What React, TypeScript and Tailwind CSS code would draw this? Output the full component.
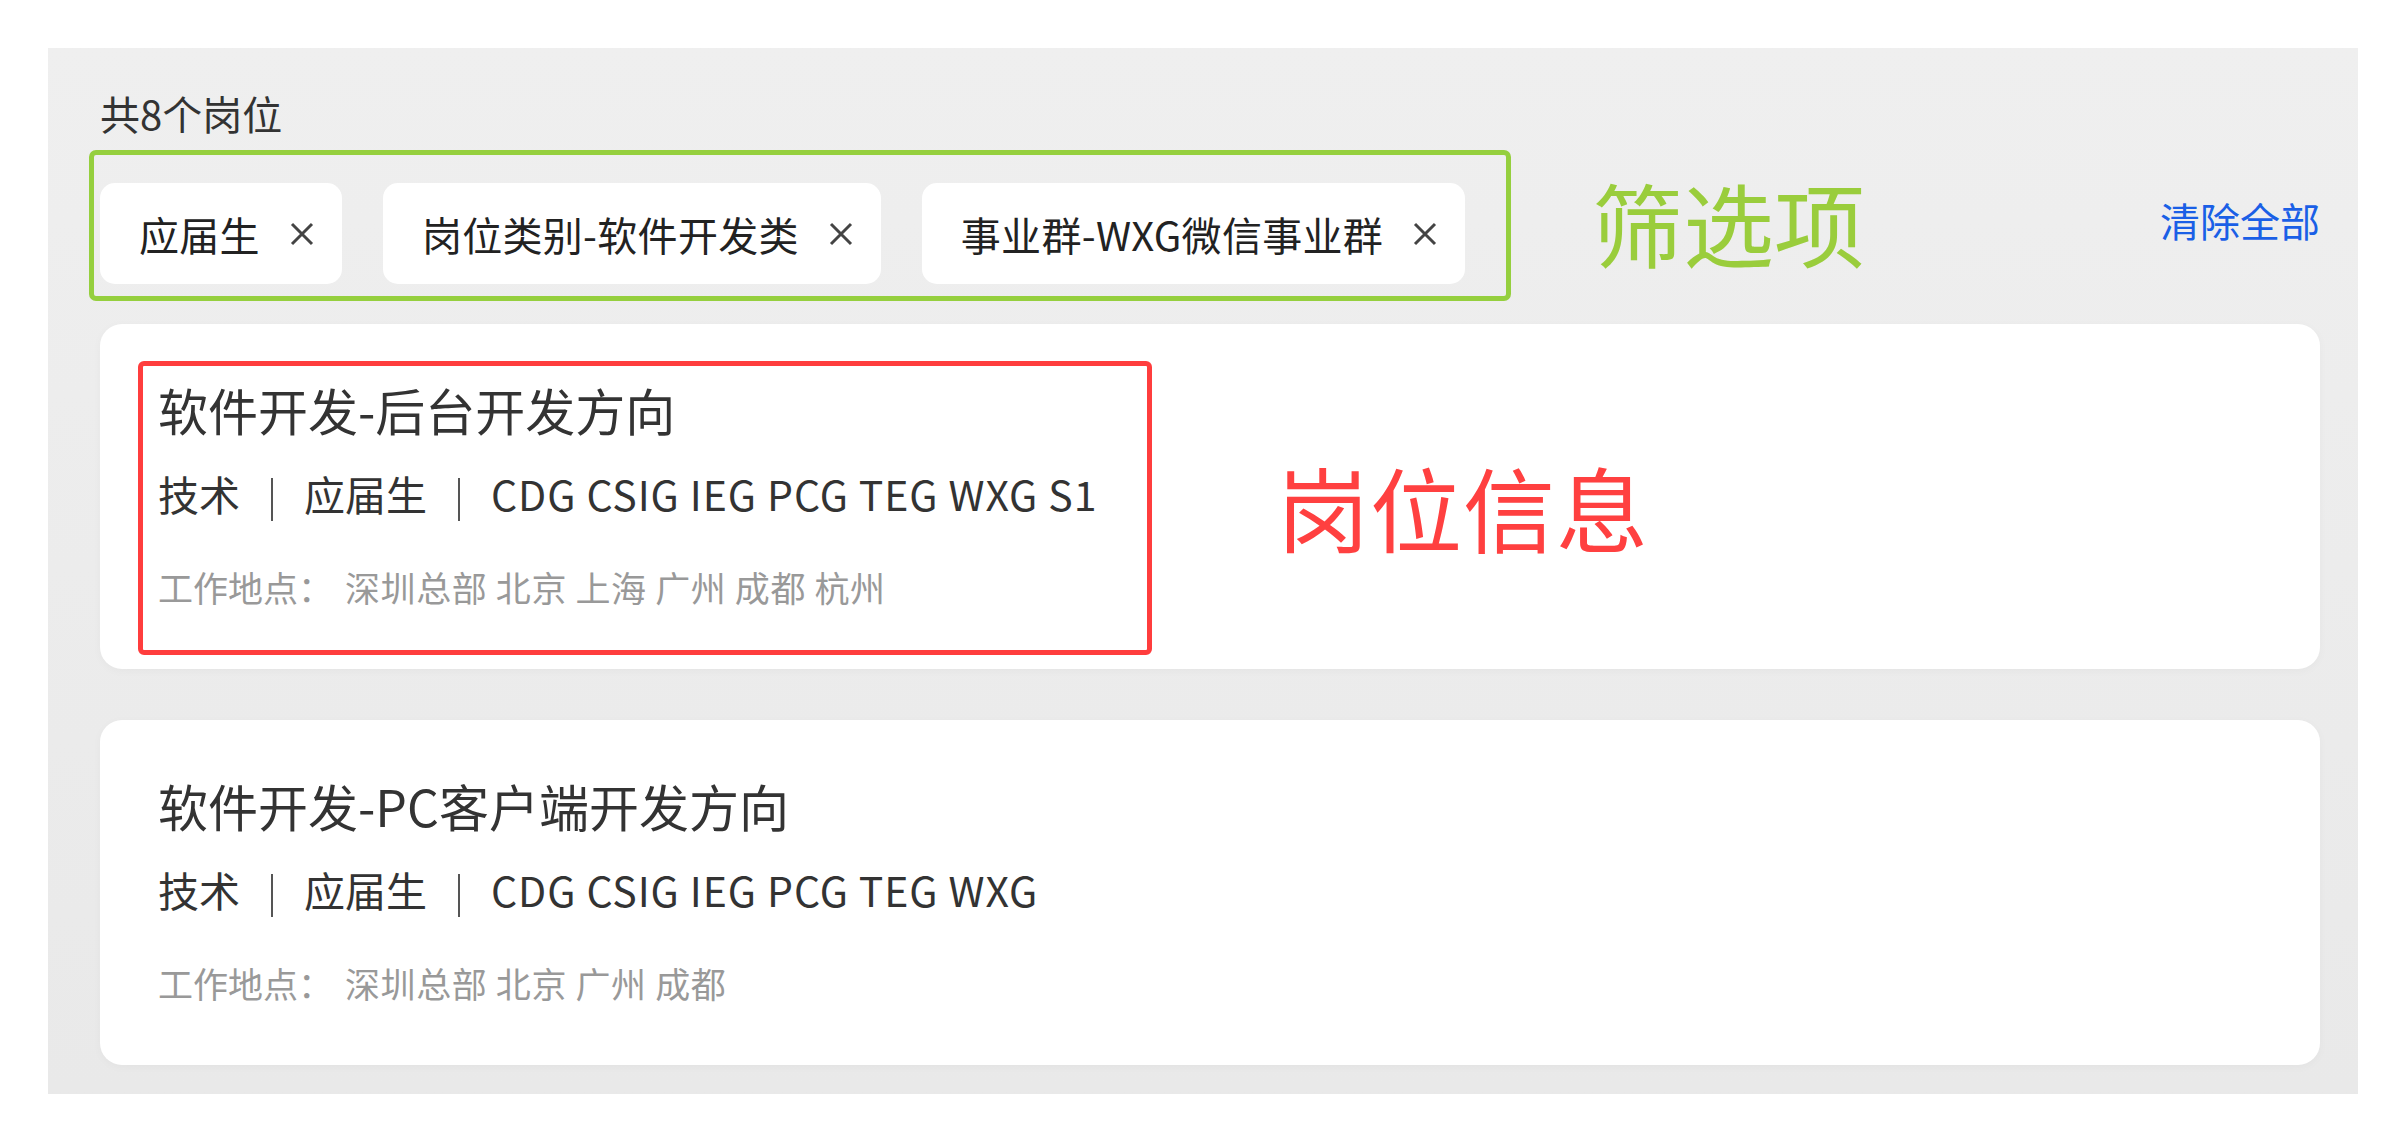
import React from 'react';

type Job = {
  id: number;
  title: string;
  bgs: string;
  cities: string;
};

const filters = ['应届生', '岗位类别-软件开发类', '事业群-WXG微信事业群'];

const jobs: Job[] = [
  {
    id: 1,
    title: '软件开发-后台开发方向',
    bgs: 'CDG CSIG IEG PCG TEG WXG S1',
    cities: '深圳总部 北京 上海 广州 成都 杭州',
  },
  {
    id: 2,
    title: '软件开发-PC客户端开发方向',
    bgs: 'CDG CSIG IEG PCG TEG WXG',
    cities: '深圳总部 北京 广州 成都',
  },
];

function CloseIcon() {
  return (
    <svg width="24" height="24" viewBox="0 0 24 24" className="ml-[30px] shrink-0">
      <path d="M2 2 L22 22 M22 2 L2 22" stroke="#444" strokeWidth="3" fill="none" />
    </svg>
  );
}

function Divider() {
  return <span className="inline-block w-[2px] h-[43px] bg-[#555] mx-[31px] align-[-10px]" />;
}

function JobCard({ job }: { job: Job }) {
  return (
    <div className="bg-white rounded-[22px] shadow-[0_2px_10px_rgba(0,0,0,0.03)] pl-[58px] pt-[50px] h-[345px]">
      <h3 className="text-[50px] leading-[70px] text-[#333] font-normal">{job.title}</h3>
      <p className="mt-[21px] text-[41px] leading-[56px] text-[#333]">
        技术
        <Divider />
        应届生
        <Divider />
        <span className="tracking-[0.9px]">{job.bgs}</span>
      </p>
      <p className="mt-[41px] text-[35px] leading-[49px] text-[#999]">
        工作地点：
        <span className="ml-[12px] tracking-[0.6px]">{job.cities}</span>
      </p>
    </div>
  );
}

export default function App() {
  return (
    <div
      className="min-h-screen bg-white pt-[48px] pl-[48px]"
      style={{ fontFamily: '"Noto Sans CJK SC", "Noto Sans", sans-serif' }}
    >
      <div className="relative w-[2310px] h-[1046px] bg-gradient-to-b from-[#efefef] to-[#e9e9e9] pl-[52px] pr-[38px] pt-[39px]">
        <div className="text-[40px] leading-[52px] text-[#333]">共8个岗位</div>

        {/* filter chips */}
        <div className="mt-[44px] flex items-center justify-between">
          <div className="flex gap-[41px]">
            {filters.map((f) => (
              <div
                key={f}
                className="h-[101px] bg-white rounded-[15px] pl-[39px] pr-[28px] flex items-center text-[40px] text-[#222]"
              >
                <span className="tracking-[0.3px]">{f}</span>
                <CloseIcon />
              </div>
            ))}
          </div>
          <button className="text-[40px] leading-[56px] text-[#1a5fe6] -mt-[28px]">清除全部</button>
        </div>

        {/* job list */}
        <div className="mt-[40px] flex flex-col gap-[51px]">
          {jobs.map((job) => (
            <JobCard key={job.id} job={job} />
          ))}
        </div>

        {/* annotations */}
        <div className="absolute left-[41px] top-[102px] w-[1422px] h-[151px] border-[5px] border-[#95cf3e] rounded-[7px]" />
        <div className="absolute left-[1544px] top-[128px] text-[91px] leading-[91px] text-[#9acd3c]">筛选项</div>
        <div className="absolute left-[90px] top-[313px] w-[1014px] h-[294px] border-[5px] border-[#ff3d3d] rounded-[6px]" />
        <div className="absolute left-[1229px] top-[412px] text-[92px] leading-[92px] tracking-[1px] text-[#ff4040]">岗位信息</div>
      </div>
    </div>
  );
}
